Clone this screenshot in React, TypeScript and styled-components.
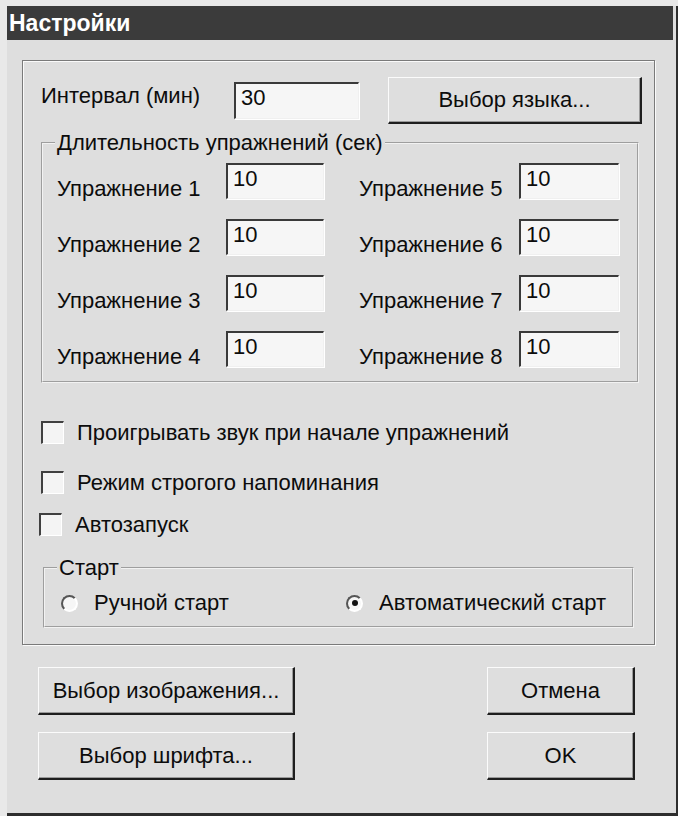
import styled, { createGlobalStyle } from "styled-components";

const GlobalStyle = createGlobalStyle`
  html, body {
    margin: 0;
    padding: 0;
    background: #e9e9e9;
  }
  body {
    font-family: "Liberation Sans", Arial, sans-serif;
    color: #0c0c0c;
  }
`;

const exercises = [1, 2, 3, 4, 5, 6, 7, 8];

const App = () => {
  const left = exercises.slice(0, 4);
  const right = exercises.slice(4);

  return (
    <>
      <GlobalStyle />
      <Window>
        <TitleBar>Настройки</TitleBar>
        <Body>
          {/* main frame */}
          <MainFrame>
            <TopRow>
              <IntervalLabel>Интервал (мин)</IntervalLabel>
              <Field $width={125} $height={37}>30</Field>
              <Button $width={254} $height={47} $left={29}>
                Выбор языка...
              </Button>
            </TopRow>

            {/* exercise durations */}
            <Group $width={598} $height={251} $top={8} $left={18}>
              <Legend>Длительность упражнений (сек)</Legend>
              <Columns>
                <Column $pad={0}>
                  {left.map((n) => (
                    <ExRow key={n}>
                      <ExLabel $width={169}>Упражнение {n}</ExLabel>
                      <Field $width={98} $height={36}>10</Field>
                    </ExRow>
                  ))}
                </Column>
                <Column $pad={35}>
                  {right.map((n) => (
                    <ExRow key={n}>
                      <ExLabel $width={160}>Упражнение {n}</ExLabel>
                      <Field $width={100} $height={36}>10</Field>
                    </ExRow>
                  ))}
                </Column>
              </Columns>
            </Group>

            <Checks>
              <CheckRow $left={18} $top={38}>
                <CheckBox />
                Проигрывать звук при начале упражнений
              </CheckRow>
              <CheckRow $left={18} $top={27}>
                <CheckBox />
                Режим строгого напоминания
              </CheckRow>
              <CheckRow $left={16} $top={19}>
                <CheckBox />
                Автозапуск
              </CheckRow>
            </Checks>

            {/* start mode */}
            <Group $width={591} $height={71} $top={21} $left={20}>
              <Legend>Старт</Legend>
              <Radios>
                <RadioRow $width={285}>
                  <Radio />
                  Ручной старт
                </RadioRow>
                <RadioRow $width={280}>
                  <Radio $checked />
                  Автоматический старт
                </RadioRow>
              </Radios>
            </Group>
          </MainFrame>

          <Footer>
            <ButtonColumn>
              <Button $width={257} $height={48}>Выбор изображения...</Button>
              <Button $width={257} $height={48}>Выбор шрифта...</Button>
            </ButtonColumn>
            <ButtonColumn>
              <Button $width={148} $height={48}>Отмена</Button>
              <Button $width={148} $height={48}>OK</Button>
            </ButtonColumn>
          </Footer>
        </Body>
      </Window>
    </>
  );
};

export default App;

const Window = styled.div`
  margin: 6px 0 0 7px;
  width: 669px;
  height: 807px;
  background: #dedede;
  border-right: 2px solid #2e2e2e;
  border-bottom: 3px solid #2e2e2e;
  display: flex;
  flex-direction: column;
`;

const TitleBar = styled.div`
  height: 34px;
  background: #3b3b3b;
  color: #fff;
  font-weight: 700;
  font-size: 23px;
  line-height: 34px;
  padding-left: 2px;
  margin-right: 3px;
`;

const Body = styled.div`
  flex: 1;
  padding: 20px 0 0 15px;
  display: flex;
  flex-direction: column;
`;

const MainFrame = styled.div`
  width: 631px;
  height: 583px;
  border: 1px solid #7a7a7a;
  box-shadow: inset 1px 1px 0 #fafafa, 1px 1px 0 #fafafa;
  box-sizing: content-box;
  display: flex;
  flex-direction: column;
`;

const TopRow = styled.div`
  display: flex;
  align-items: center;
  padding: 16px 0 0 18px;
`;

const IntervalLabel = styled.span`
  width: 193px;
  font-size: 22px;
  margin-top: -10px;
`;

const Field = styled.div<{ $width: number; $height: number }>`
  box-sizing: border-box;
  width: ${(p) => p.$width}px;
  height: ${(p) => p.$height}px;
  background: #f6f6f6;
  border-top: 2px solid #3a3a3a;
  border-left: 2px solid #3a3a3a;
  border-right: 1px solid #f0f0f0;
  border-bottom: 1px solid #f0f0f0;
  box-shadow: 1px 1px 0 #fff;
  font-size: 22px;
  padding: 1px 0 0 5px;
  line-height: 26px;
`;

const Button = styled.div<{ $width: number; $height: number; $left?: number }>`
  box-sizing: border-box;
  width: ${(p) => p.$width}px;
  height: ${(p) => p.$height}px;
  margin-left: ${(p) => p.$left ?? 0}px;
  background: #dedede;
  border-top: 1px solid #fbfbfb;
  border-left: 1px solid #fbfbfb;
  border-right: 2px solid #1e1e1e;
  border-bottom: 2px solid #1e1e1e;
  box-shadow: inset -1px -1px 0 #9a9a9a;
  display: flex;
  align-items: center;
  justify-content: center;
  font-size: 22px;
`;

const Group = styled.fieldset<{
  $width: number;
  $height: number;
  $top: number;
  $left: number;
}>`
  box-sizing: border-box;
  width: ${(p) => p.$width}px;
  height: ${(p) => p.$height}px;
  margin: ${(p) => p.$top}px 0 0 ${(p) => p.$left}px;
  padding: 0;
  border: 2px groove #f2f2f2;
  min-inline-size: 0;
`;

const Legend = styled.legend`
  margin-left: 12px;
  padding: 0 2px;
  font-size: 22px;
  line-height: 22px;
`;

const Columns = styled.div`
  display: flex;
  padding: 9px 0 0 14px;
`;

const Column = styled.div<{ $pad: number }>`
  display: flex;
  flex-direction: column;
  gap: 20px;
  padding-left: ${(p) => p.$pad}px;
`;

const ExRow = styled.div`
  display: flex;
  align-items: flex-end;
`;

const ExLabel = styled.span<{ $width: number }>`
  width: ${(p) => p.$width}px;
  font-size: 22px;
  line-height: 22px;
  margin-bottom: -1px;
`;

const Checks = styled.div`
  display: flex;
  flex-direction: column;
`;

const CheckRow = styled.div<{ $left: number; $top: number }>`
  display: flex;
  align-items: center;
  gap: 13px;
  margin-top: ${(p) => p.$top}px;
  padding-left: ${(p) => p.$left}px;
  font-size: 22px;
  height: 23px;
`;

const CheckBox = styled.span`
  box-sizing: border-box;
  width: 23px;
  height: 23px;
  background: #f4f4f4;
  border-top: 2px solid #404040;
  border-left: 2px solid #404040;
  border-right: 1px solid #fff;
  border-bottom: 1px solid #fff;
`;

const Radios = styled.div`
  display: flex;
  padding: 11px 0 0 16px;
`;

const RadioRow = styled.div<{ $width: number }>`
  width: ${(p) => p.$width}px;
  display: flex;
  align-items: center;
  gap: 16px;
  font-size: 22px;
`;

const Radio = styled.span<{ $checked?: boolean }>`
  box-sizing: border-box;
  position: relative;
  width: 17px;
  height: 17px;
  border-radius: 50%;
  background: #f6f6f6;
  border: 2px solid;
  border-color: #555 #fff #fff #555;

  &::after {
    content: "";
    display: ${(p) => (p.$checked ? "block" : "none")};
    position: absolute;
    left: 3.5px;
    top: 3.5px;
    width: 6px;
    height: 6px;
    border-radius: 50%;
    background: #111;
  }
`;

const Footer = styled.div`
  display: flex;
  justify-content: space-between;
  width: 597px;
  margin: 22px 0 0 16px;
`;

const ButtonColumn = styled.div`
  display: flex;
  flex-direction: column;
  gap: 17px;
`;
